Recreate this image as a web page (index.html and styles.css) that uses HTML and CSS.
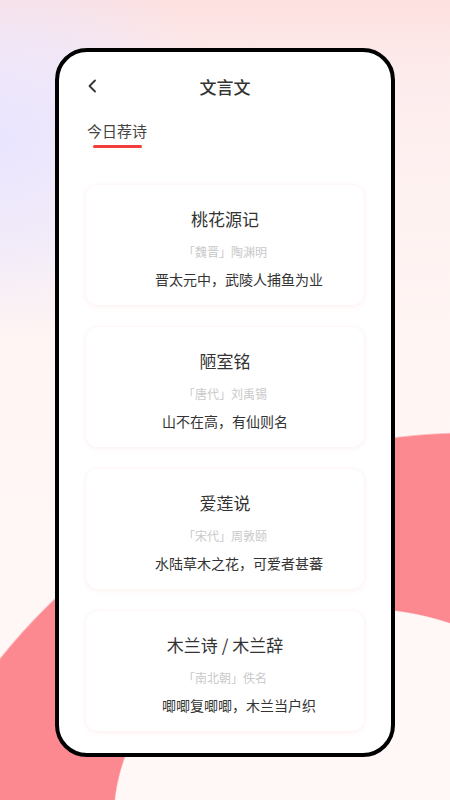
FILE: index.html
```html
<!DOCTYPE html>
<html lang="zh-CN">
<head>
<meta charset="utf-8">
<title>文言文</title>
<link rel="stylesheet" href="styles.css">
</head>
<body>
<div class="phone">
  <header class="topbar">
    <span class="back">
      <svg width="10" height="14" viewBox="0 0 10 14"><path d="M8 1.5 L2.5 7 L8 12.5" fill="none" stroke="#333" stroke-width="1.8" stroke-linecap="round" stroke-linejoin="round"/></svg>
    </span>
    <h1 class="title">文言文</h1>
    <span class="spacer"></span>
  </header>
  <section class="section">
    <h2 class="section-title">今日荐诗</h2>
    <div class="cards">
      <div class="card">
        <div class="card-title">桃花源记</div>
        <div class="card-author">「魏晋」陶渊明</div>
        <div class="card-line indent">晋太元中，武陵人捕鱼为业</div>
      </div>
      <div class="card">
        <div class="card-title">陋室铭</div>
        <div class="card-author">「唐代」刘禹锡</div>
        <div class="card-line">山不在高，有仙则名</div>
      </div>
      <div class="card">
        <div class="card-title">爱莲说</div>
        <div class="card-author">「宋代」周敦颐</div>
        <div class="card-line indent">水陆草木之花，可爱者甚蕃</div>
      </div>
      <div class="card">
        <div class="card-title">木兰诗 / 木兰辞</div>
        <div class="card-author">「南北朝」佚名</div>
        <div class="card-line indent">唧唧复唧唧，木兰当户织</div>
      </div>
    </div>
  </section>
</div>
</body>
</html>
```
FILE: styles.css
```css
html, body {
  margin: 0;
  padding: 0;
}
body {
  min-height: 800px;
  font-family: "Noto Sans CJK SC", "Noto Sans", sans-serif;
  color: #333;
  background:
    radial-gradient(ellipse 247px 212px at 360px 820px, #fff8f7 99.4%, rgba(255,248,247,0) 100%),
    radial-gradient(circle 603px at 470px 1035px, #fd8990 99.7%, rgba(253,137,144,0) 100%),
    radial-gradient(ellipse 230px 200px at 0 140px, rgba(233,229,255,1) 0%, rgba(233,229,255,0.6) 50%, rgba(233,229,255,0) 100%),
    linear-gradient(180deg, #fde0df 0px, #fdebec 70px, #fef2f1 200px, #fff6f4 400px, #fff8f7 800px);
  background-repeat: no-repeat;
  padding-top: 48px;
  box-sizing: border-box;
}
.phone {
  width: 340px;
  height: 709px;
  margin: 0 auto;
  box-sizing: border-box;
  border: 4px solid #000;
  border-radius: 32px;
  background: #fff;
  overflow: hidden;
}
.topbar {
  display: grid;
  grid-template-columns: 1fr auto 1fr;
  align-items: center;
  padding: 23px 28px 0 28px;
}
.back {
  display: flex;
  align-items: center;
  height: 24px;
}
.back svg {
  display: block;
  margin-top: -2px;
}
.title {
  margin: 0;
  font-size: 17px;
  line-height: 24px;
  font-weight: 500;
  color: #333;
}
.section {
  padding: 22px 27px 0 27px;
}
.section-title {
  margin: 0 0 0 1px;
  font-size: 15px;
  line-height: 20px;
  font-weight: 400;
  color: #444;
}
.section-title::after {
  content: "";
  display: block;
  width: 49px;
  height: 3px;
  margin: 4px 0 0 6px;
  border-radius: 2px;
  background: #f23d3d;
}
.cards {
  display: flex;
  flex-direction: column;
  gap: 22px;
  margin-top: 37px;
}
.card {
  height: 120px;
  box-sizing: border-box;
  border-radius: 12px;
  background: #fff;
  box-shadow: 0 0 4px rgba(245, 150, 150, 0.12), 0 2px 6px rgba(245, 150, 150, 0.08);
  text-align: center;
  padding-top: 22px;
}
.card-title {
  font-size: 17px;
  line-height: 24px;
  color: #333;
}
.card-author {
  margin-top: 13px;
  font-size: 12px;
  line-height: 16px;
  color: #c9c9c9;
}
.card-line {
  margin-top: 9px;
  font-size: 14px;
  line-height: 20px;
  color: #333;
}
.indent {
  text-indent: 2em;
}
```
